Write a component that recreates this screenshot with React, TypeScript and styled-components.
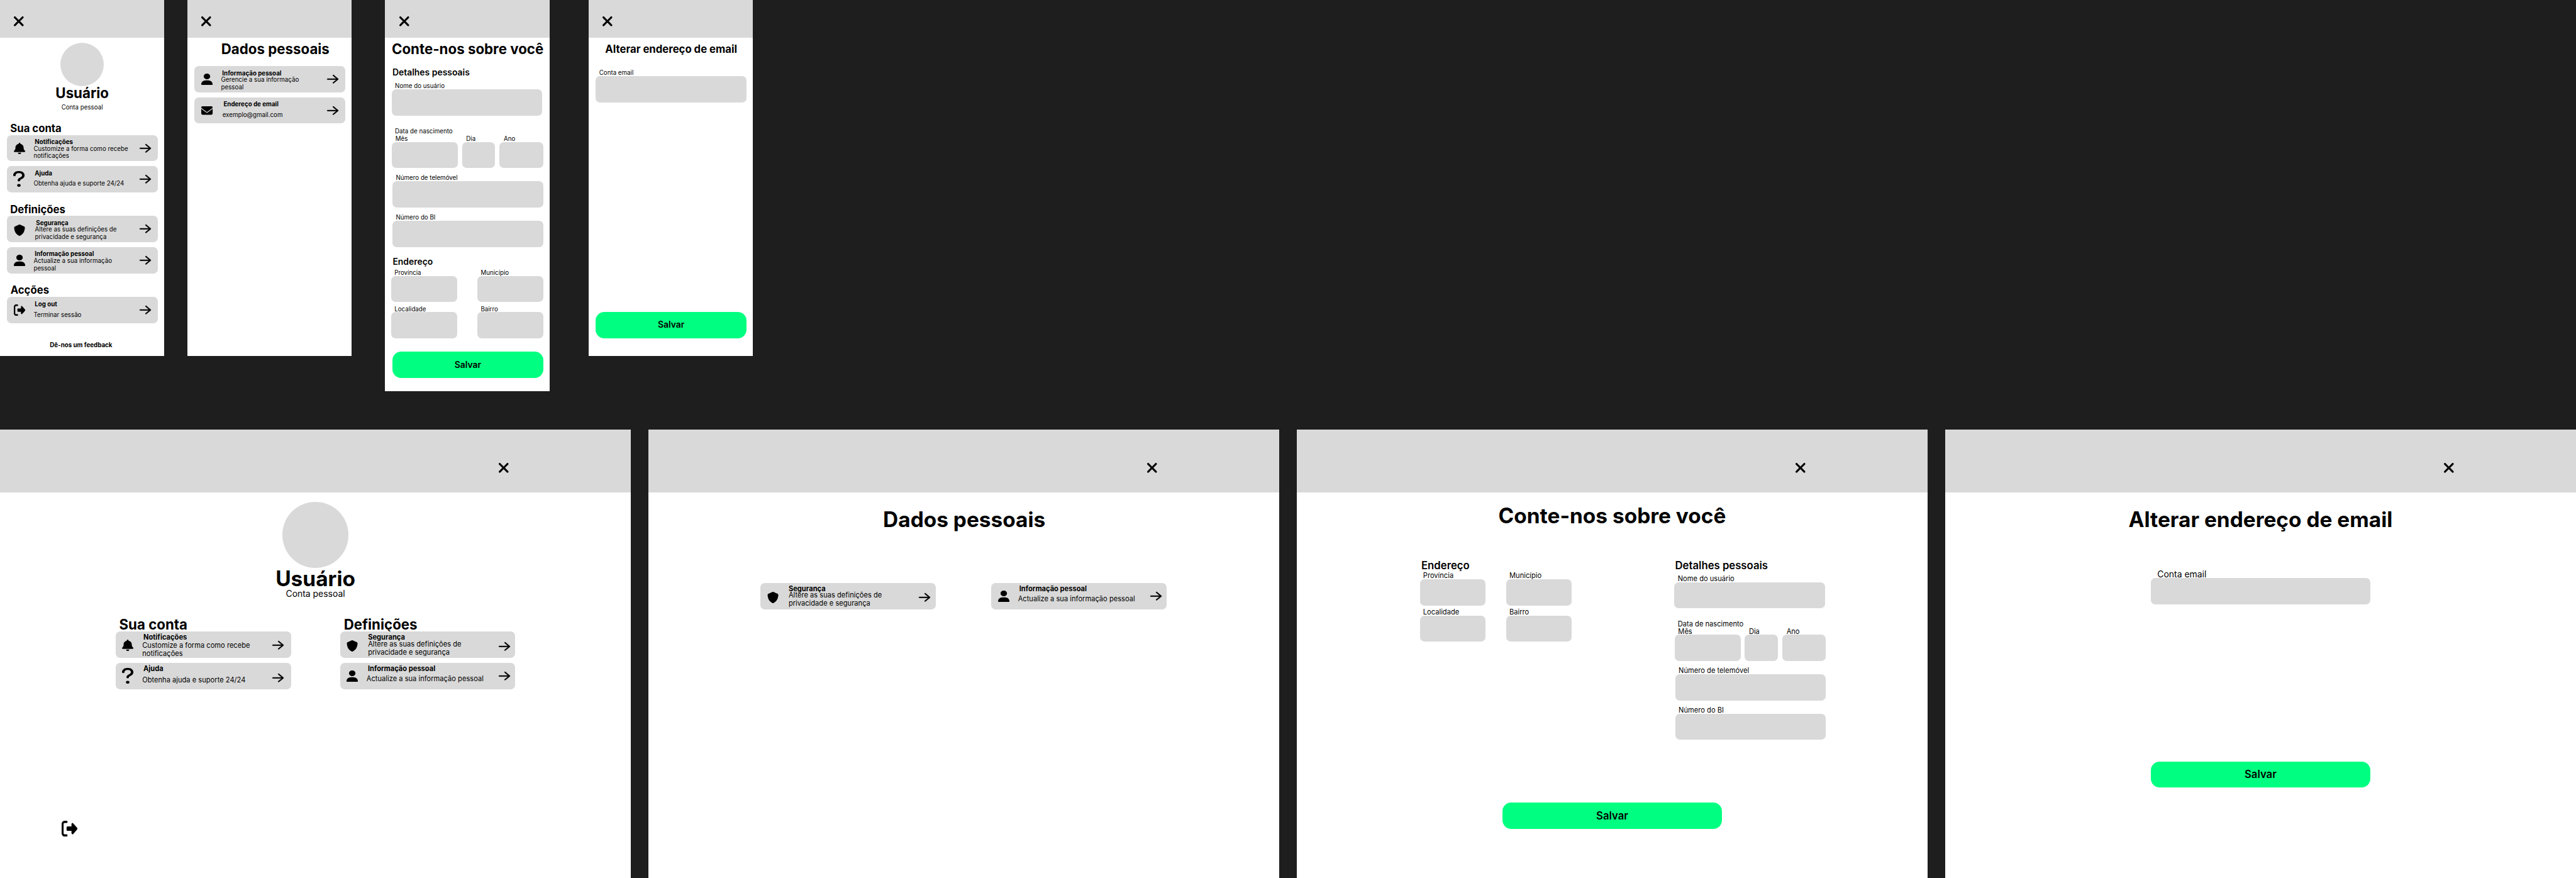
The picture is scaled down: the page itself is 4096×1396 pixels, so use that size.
import React from "react";
import styled, { createGlobalStyle } from "styled-components";

/* Design units are converted to page pixels by this ratio. */
const RATIO = 4096 / 5880;
const u = (n: number) => `${(n * RATIO).toFixed(3)}px`;

const INK = "#000000";
const GREY = "#d9d9d9";
const GREEN = "#00ff80";
const CANVAS = "#1e1e1e";

const GlobalStyle = createGlobalStyle`
  html, body { margin: 0; padding: 0; background: ${CANVAS}; }
  * { box-sizing: border-box; }
  h1, h2, h3, p { margin: 0; }
`;

/* ---------- board ---------- */

const Board = styled.main`
  width: 4096px;
  height: 1396px;
  overflow: hidden;
  display: flex;
  flex-direction: column;
  background: ${CANVAS};
  color: ${INK};
  font-family: Inter, "Liberation Sans", sans-serif;
`;

const PhoneRow = styled.section`
  display: flex;
  align-items: flex-start;
  height: ${u(980)};
  flex: none;
`;

const DesktopRow = styled.section`
  display: flex;
  flex: none;
  gap: ${u(40)};
`;

const Phone = styled.article<{ $gap?: number; $height?: number }>`
  flex: none;
  display: flex;
  flex-direction: column;
  width: ${u(375)};
  height: ${(p) => u(p.$height ?? 812)};
  margin-left: ${(p) => u(p.$gap ?? 0)};
  background: #ffffff;
`;

const Desktop = styled.article`
  flex: none;
  display: flex;
  flex-direction: column;
  width: ${u(1440)};
  height: ${u(1024.4)};
  background: #ffffff;
`;

const PhoneBar = styled.header`
  flex: none;
  height: ${u(86)};
  padding: ${u(37)} 0 0 ${u(32)};
  background: ${GREY};
`;

const DesktopBar = styled.header`
  flex: none;
  height: ${u(144)};
  padding: ${u(76.9)} 0 0 ${u(1137.9)};
  background: ${GREY};
`;

/* ---------- icons ---------- */

const Glyph = styled.svg<{ $w: number; $h: number; $stroke: number }>`
  display: block;
  flex: none;
  width: ${(p) => u(p.$w)};
  height: ${(p) => u(p.$h)};
  overflow: visible;
  fill: ${INK};
  stroke: ${INK};
  stroke-width: ${(p) => p.$stroke};
`;

type IconName = "close" | "bell" | "question" | "shield" | "user" | "envelope" | "logout" | "arrow";

const ICONS: Record<IconName, { box: string; w: number; h: number; stroke?: number; d: string }> = {
  close: {
    box: "32 96 320 320",
    w: 22.4,
    h: 22.6,
    d: "M342.6 150.6c12.5-12.5 12.5-32.8 0-45.3s-32.8-12.5-45.3 0L192 210.7 86.6 105.4c-12.5-12.5-32.8-12.5-45.3 0s-12.5 32.8 0 45.3L146.7 256 41.4 361.4c-12.5 12.5-12.5 32.8 0 45.3s32.8 12.5 45.3 0L192 301.3 297.4 406.6c12.5 12.5 32.8 12.5 45.3 0s12.5-32.8 0-45.3L237.3 256 342.6 150.6z",
  },
  bell: {
    box: "0 0 448 512",
    w: 26,
    h: 26,
    d: "M224 0c-17.7 0-32 14.3-32 32l0 19.2C119 66 64 130.6 64 208l0 18.8c0 47-17.3 92.4-48.5 127.6l-7.4 8.3c-8.4 9.4-10.4 22.9-5.3 34.4S19.4 416 32 416l384 0c12.6 0 24-7.4 29.2-18.9s3.1-25-5.3-34.4l-7.4-8.3C401.3 319.2 384 273.9 384 226.8l0-18.8c0-77.4-55-142-128-156.8L256 32c0-17.7-14.3-32-32-32zm45.3 493.3c12-12 18.7-28.3 18.7-45.3l-64 0-64 0c0 17 6.7 33.3 18.7 45.3s28.3 18.7 45.3 18.7s33.3-6.7 45.3-18.7z",
  },
  question: {
    box: "16 32 288 488",
    w: 26,
    h: 36,
    d: "M80 160c0-35.3 28.7-64 64-64h32c35.3 0 64 28.7 64 64v3.6c0 21.8-11.1 42.1-29.4 53.8l-42.2 27.1c-25.2 16.2-40.4 44.1-40.4 74V320c0 17.7 14.3 32 32 32s32-14.3 32-32v-1.4c0-8.2 4.2-15.8 11-20.2l42.2-27.1c36.6-23.6 58.8-64.1 58.8-107.7V160c0-70.7-57.3-128-128-128H144C73.3 32 16 89.3 16 160c0 17.7 14.3 32 32 32s32-14.3 32-32zm80 360a44 44 0 1 0 0-88 44 44 0 1 0 0 88z",
  },
  shield: {
    box: "0 0 512 512",
    w: 26,
    h: 26,
    d: "M256 0c4.6 0 9.2 1 13.4 2.9L457.7 82.8c22 9.3 38.4 31 38.3 57.2c-.5 99.2-41.3 280.7-213.6 363.2c-16.7 8-36.1 8-52.8 0C57.3 420.7 16.5 239.2 16 140c-.1-26.2 16.3-47.9 38.3-57.2L242.7 2.9C246.8 1 251.4 0 256 0z",
  },
  user: {
    box: "0 0 448 512",
    w: 26,
    h: 26,
    d: "M224 256A128 128 0 1 0 224 0a128 128 0 1 0 0 256zm-45.7 48C79.8 304 0 383.8 0 482.3C0 498.7 13.3 512 29.7 512l388.6 0c16.4 0 29.7-13.3 29.7-29.7C448 383.8 368.2 304 269.7 304l-91.4 0z",
  },
  envelope: {
    box: "0 64 512 384",
    w: 26,
    h: 19.5,
    d: "M48 64C21.5 64 0 85.5 0 112c0 15.1 7.1 29.3 19.2 38.4L236.8 313.6c11.4 8.5 27 8.5 38.4 0L492.8 150.4c12.1-9.1 19.2-23.3 19.2-38.4c0-26.5-21.5-48-48-48L48 64zM0 176L0 384c0 35.3 28.7 64 64 64l384 0c35.3 0 64-28.7 64-64l0-208L294.4 339.2c-22.8 17.1-54 17.1-76.8 0L0 176z",
  },
  logout: {
    box: "0 32 512 448",
    w: 26,
    h: 26,
    d: "M377.9 105.9L500.7 228.7c7.2 7.2 11.3 17.1 11.3 27.3s-4.1 20.1-11.3 27.3L377.9 406.1c-6.4 6.4-15 9.9-24 9.9c-18.7 0-33.9-15.2-33.9-33.9l0-62.1-128 0c-17.7 0-32-14.3-32-32l0-64c0-17.7 14.3-32 32-32l128 0 0-62.1c0-18.7 15.2-33.9 33.9-33.9c9 0 17.6 3.6 24 9.9zM160 96L96 96c-17.7 0-32 14.3-32 32l0 256c0 17.7 14.3 32 32 32l64 0c17.7 0 32 14.3 32 32s-14.3 32-32 32l-64 0c-53 0-96-43-96-96L0 128C0 75 43 32 96 32l64 0c17.7 0 32 14.3 32 32s-14.3 32-32 32z",
  },
  arrow: {
    box: "0 64 448 384",
    w: 26,
    h: 19.5,
    stroke: 9,
    d: "M440.6 273.4c4.7-4.5 7.4-10.8 7.4-17.4s-2.7-12.8-7.4-17.4l-176-168c-9.6-9.2-24.8-8.8-33.9 .8s-8.8 24.8 .8 33.9L364 232 24 232c-13.3 0-24 10.7-24 24s10.7 24 24 24l340 0L231.4 406.6c-9.6 9.2-9.9 24.3-.8 33.9s24.3 9.9 33.9 .8l176-168z",
  },
};

const Icon = ({ name, w, h }: { name: IconName; w?: number; h?: number }) => {
  const icon = ICONS[name];
  return (
    <Glyph
      $w={w ?? icon.w}
      $h={h ?? icon.h}
      $stroke={icon.stroke ?? 0}
      viewBox={icon.box}
      preserveAspectRatio="none"
      aria-hidden="true"
    >
      <path d={icon.d} />
    </Glyph>
  );
};

/* ---------- text ---------- */

interface TextProps {
  $size: number;
  $line: number;
  $top?: number;
  $left?: number;
}

const Title = styled.h1<TextProps>`
  flex: none;
  margin-top: ${(p) => u(p.$top ?? 0)};
  padding-left: ${(p) => u(p.$left ?? 0)};
  height: ${(p) => u(p.$line)};
  line-height: ${(p) => u(p.$line)};
  font-size: ${(p) => u(p.$size)};
  font-weight: 700;
  text-align: center;
  white-space: nowrap;
`;

const GroupHeading = styled.h2<TextProps & { $weight?: number }>`
  flex: none;
  margin-top: ${(p) => u(p.$top ?? 0)};
  padding-left: ${(p) => u(p.$left ?? 0)};
  height: ${(p) => u(p.$line)};
  line-height: ${(p) => u(p.$line + 0.8)};
  font-size: ${(p) => u(p.$size)};
  font-weight: ${(p) => p.$weight ?? 700};
  white-space: nowrap;
`;

const Caption = styled.p<TextProps>`
  margin-top: ${(p) => u(p.$top ?? 0)};
  height: ${(p) => u(p.$line)};
  line-height: ${(p) => u(p.$line + 1.6)};
  font-size: ${(p) => u(p.$size)};
  text-align: center;
`;

const Feedback = styled.p`
  margin-top: ${u(41.8)};
  padding-right: ${u(5)};
  line-height: ${u(17)};
  font-size: ${u(14)};
  font-weight: 700;
  text-align: center;
`;

/* ---------- profile and option rows ---------- */

const Avatar = styled.div<{ $size: number; $top: number }>`
  flex: none;
  align-self: center;
  width: ${(p) => u(p.$size)};
  height: ${(p) => u(p.$size)};
  margin-top: ${(p) => u(p.$top)};
  border-radius: 50%;
  background: ${GREY};
`;

const OptionList = styled.div<{ $width: number; $top?: number; $left?: number }>`
  flex: none;
  display: flex;
  flex-direction: column;
  gap: ${u(11)};
  width: ${(p) => u(p.$width)};
  margin-top: ${(p) => u(p.$top ?? 0)};
  margin-left: ${(p) => u(p.$left ?? 0)};
`;

const OptionCard = styled.div`
  display: flex;
  align-items: flex-start;
  height: ${u(60)};
  border-radius: ${u(10)};
  background: ${GREY};
`;

const IconSlot = styled.div<{ $top: number; $left: number }>`
  flex: none;
  width: ${u(60.7)};
  padding: ${(p) => `${u(p.$top)} 0 0 ${u(p.$left)}`};
`;

const OptionText = styled.div<{ $shift: number; $top: number }>`
  flex: 1;
  padding: ${(p) => `${u(p.$top)} 0 0 ${u(p.$shift)}`};
`;

const OptionTitle = styled.h3<{ $size: number; $indent: number; $box: number }>`
  height: ${(p) => u(p.$box)};
  padding-left: ${(p) => u(p.$indent)};
  line-height: ${(p) => u(p.$size * 1.21)};
  font-size: ${(p) => u(p.$size)};
  font-weight: 700;
  white-space: nowrap;
`;

const OptionDetail = styled.p<{ $size: number; $line: number }>`
  line-height: ${(p) => u(p.$line)};
  font-size: ${(p) => u(p.$size)};
  white-space: pre;
`;

const ArrowSlot = styled.div<{ $center: number; $right: number }>`
  flex: none;
  padding: ${(p) => `${u(p.$center - 9.75)} ${u(p.$right)} 0 0`};
`;

interface OptionProps {
  icon: IconName;
  title: string;
  detail: string;
  iconTop: number;
  detailTop: number;
  iconLeft?: number;
  shift?: number;
  indent?: number;
  large?: boolean;
  arrowCenter?: number;
  arrowRight?: number;
}

const Option = ({
  icon,
  title,
  detail,
  iconTop,
  detailTop,
  iconLeft = 15,
  shift = 0,
  indent = 2.6,
  large = false,
  arrowCenter = 30,
  arrowRight = 16,
}: OptionProps) => {
  const size = large ? 16 : 14;
  const top = large ? 3.8 : 8.2;
  return (
    <OptionCard>
      <IconSlot $top={iconTop} $left={iconLeft}>
        <Icon name={icon} />
      </IconSlot>
      <OptionText $shift={shift} $top={top}>
        <OptionTitle $size={size} $indent={indent} $box={detailTop + 0.8 - top}>
          {title}
        </OptionTitle>
        <OptionDetail $size={size} $line={large ? 19 : 17}>
          {detail}
        </OptionDetail>
      </OptionText>
      <ArrowSlot $center={arrowCenter} $right={arrowRight}>
        <Icon name="arrow" />
      </ArrowSlot>
    </OptionCard>
  );
};

/* ---------- form parts ---------- */

const FieldRow = styled.div<{ $gap: number; $left?: number; $top?: number }>`
  display: flex;
  gap: ${(p) => u(p.$gap)};
  margin-top: ${(p) => u(p.$top ?? 0)};
  margin-left: ${(p) => u(p.$left ?? 0)};
`;

const FieldBlock = styled.label<{ $width: number; $left?: number; $top?: number }>`
  flex: none;
  display: flex;
  flex-direction: column;
  width: ${(p) => u(p.$width)};
  margin-top: ${(p) => u(p.$top ?? 0)};
  margin-left: ${(p) => u(p.$left ?? 0)};
`;

const FieldLabel = styled.span<{ $size: number; $box: number; $indent: number }>`
  height: ${(p) => u(p.$box)};
  padding-left: ${(p) => u(p.$indent)};
  line-height: ${(p) => u(p.$size * 1.21 + 1.8)};
  font-size: ${(p) => u(p.$size)};
  white-space: nowrap;
`;

const FieldBox = styled.span`
  height: ${u(60)};
  border-radius: ${u(10)};
  background: ${GREY};
`;

const SaveButton = styled.button<{ $width: number; $top: number; $left: number; $size: number }>`
  flex: none;
  width: ${(p) => u(p.$width)};
  height: ${u(60)};
  margin: ${(p) => `${u(p.$top)} 0 0 ${u(p.$left)}`};
  padding: 0;
  border: 0;
  border-radius: ${u(20)};
  background: ${GREEN};
  color: ${INK};
  font-family: inherit;
  font-size: ${(p) => u(p.$size)};
  font-weight: 600;
  line-height: ${(p) => u(p.$size * 1.21)};
`;

const Columns = styled.div<{ $top: number; $left: number; $gap: number }>`
  flex: none;
  display: flex;
  align-items: flex-start;
  gap: ${(p) => u(p.$gap)};
  margin-top: ${(p) => u(p.$top)};
  margin-left: ${(p) => u(p.$left)};
`;

const Column = styled.div<{ $width: number; $left?: number; $top?: number }>`
  flex: none;
  display: flex;
  flex-direction: column;
  width: ${(p) => u(p.$width)};
  margin-top: ${(p) => u(p.$top ?? 0)};
  margin-left: ${(p) => u(p.$left ?? 0)};
`;

const SignOut = styled.div`
  padding: ${u(300)} 0 0 ${u(140)};
`;

interface Scale {
  label: number;
  box: number;
  heading: number;
  headingLine: number;
}

const PHONE: Scale = { label: 14, box: 17, heading: 20, headingLine: 24 };
const DESKTOP: Scale = { label: 16, box: 18, heading: 24, headingLine: 29 };

interface FieldProps {
  label: string;
  width: number;
  scale: Scale;
  indent?: number;
  left?: number;
  top?: number;
}

const Field = ({ label, width, scale, indent = 7.7, left, top }: FieldProps) => (
  <FieldBlock $width={width} $left={left} $top={top}>
    <FieldLabel $size={scale.label} $box={scale.box} $indent={indent}>
      {label}
    </FieldLabel>
    <FieldBox />
  </FieldBlock>
);

const PersonalDetails = ({ scale, gaps }: { scale: Scale; gaps: [number, number, number] }) => (
  <>
    <GroupHeading $size={scale.heading} $line={scale.headingLine} $left={1.7} $weight={600}>
      Detalhes pessoais
    </GroupHeading>
    <Field label="Nome do usuário" width={344} scale={scale} top={gaps[0]} />
    <FieldBlock as="div" $width={344} $top={gaps[1]}>
      <FieldLabel $size={scale.label} $box={17} $indent={7.7}>
        Data de nascimento
      </FieldLabel>
    </FieldBlock>
    <FieldRow $gap={10} $left={1}>
      <Field label="Mês" width={150} scale={scale} indent={7.6} />
      <Field label="Dia" width={75} scale={scale} indent={9.2} />
      <Field label="Ano" width={100} scale={scale} indent={10} />
    </FieldRow>
    <Field label="Número de telemóvel" width={344} scale={scale} left={2} top={gaps[2]} />
    <Field label="Número do BI" width={344} scale={scale} left={2} top={gaps[2]} />
  </>
);

const Address = ({ scale, gaps }: { scale: Scale; gaps: [number, number] }) => (
  <>
    <GroupHeading $size={scale.heading} $line={scale.headingLine} $left={3.4} $weight={600}>
      Endereço
    </GroupHeading>
    <FieldRow $gap={47} $top={gaps[0]}>
      <Field label="Província" width={150} scale={scale} indent={7.4} />
      <Field label="Município" width={150} scale={scale} indent={7.4} />
    </FieldRow>
    <FieldRow $gap={47} $top={gaps[1]}>
      <Field label="Localidade" width={150} scale={scale} indent={7.4} />
      <Field label="Bairro" width={150} scale={scale} indent={7.4} />
    </FieldRow>
  </>
);

/* ---------- phone screens ---------- */

const PhoneAccount = () => (
  <Phone>
    <PhoneBar>
      <Icon name="close" />
    </PhoneBar>
    <Avatar $size={100} $top={11} />
    <Title $size={32} $line={39} $top={-5}>
      Usuário
    </Title>
    <Caption $size={14} $line={17} $top={6.4}>
      Conta pessoal
    </Caption>
    <GroupHeading $size={24} $line={29} $top={23.9} $left={23.5}>
      Sua conta
    </GroupHeading>
    <OptionList $width={344} $left={16} $top={0.7}>
      <Option icon="bell" iconTop={18} title="Notificações" detail={"Customize a forma como recebe\nnotificações"} detailTop={22.4} />
      <Option icon="question" iconTop={11} iconLeft={14} title="Ajuda" detail="Obtenha ajuda e suporte 24/24" detailTop={31.4} />
    </OptionList>
    <GroupHeading $size={24} $line={29} $top={24.3} $left={23.3}>
      Definições
    </GroupHeading>
    <OptionList $width={344} $left={16} $top={0.7}>
      <Option icon="shield" iconTop={20} shift={3} title="Segurança" detail={"Altere as suas definições de\nprivacidade e segurança"} detailTop={22.4} />
      <Option icon="user" iconTop={17} title="Informação pessoal" detail={"Actualize a sua informação\npessoal"} detailTop={22.4} />
    </OptionList>
    <GroupHeading $size={24} $line={29} $top={24.3} $left={24}>
      Acções
    </GroupHeading>
    <OptionList $width={344} $left={16} $top={0.7}>
      <Option icon="logout" iconTop={17} title="Log out" detail="Terminar sessão" detailTop={31.4} />
    </OptionList>
    <Feedback>Dê-nos um feedback</Feedback>
  </Phone>
);

const PhoneData = () => (
  <Phone $gap={53}>
    <PhoneBar>
      <Icon name="close" />
    </PhoneBar>
    <Title $size={32} $line={39} $top={6} $left={26}>
      Dados pessoais
    </Title>
    <OptionList $width={344} $left={16} $top={20}>
      <Option icon="user" iconTop={17} title="Informação pessoal" detail={"Gerencie a sua informação\npessoal"} detailTop={22.4} />
      <Option icon="envelope" iconTop={20.3} iconLeft={16} shift={3} title="Endereço de email" detail="exemplo@gmail.com" detailTop={31.4} />
    </OptionList>
  </Phone>
);

const PhoneForm = () => (
  <Phone $gap={76} $height={893}>
    <PhoneBar>
      <Icon name="close" />
    </PhoneBar>
    <Title $size={32} $line={39} $top={6} $left={2}>
      Conte-nos sobre você
    </Title>
    <Column $width={346} $left={15} $top={22.6}>
      <PersonalDetails scale={PHONE} gaps={[9.4, 26, 13]} />
    </Column>
    <Column $width={347} $left={14} $top={22.6}>
      <Address scale={PHONE} gaps={[2.4, 6]} />
    </Column>
    <SaveButton $width={344} $top={30} $left={17} $size={20}>
      Salvar
    </SaveButton>
  </Phone>
);

const PhoneEmail = () => (
  <Phone $gap={90}>
    <PhoneBar>
      <Icon name="close" />
    </PhoneBar>
    <Title $size={24} $line={29} $top={11} $left={1}>
      Alterar endereço de email
    </Title>
    <Field label="Conta email" width={344} scale={PHONE} left={16} top={31} />
    <SaveButton $width={344} $top={478} $left={16} $size={20}>
      Salvar
    </SaveButton>
  </Phone>
);

/* ---------- desktop screens ---------- */

const SecurityOption = () => (
  <Option
    large
    icon="shield"
    iconTop={20}
    shift={3.4}
    indent={0}
    title="Segurança"
    detail={"Altere as suas definições de\nprivacidade e segurança"}
    detailTop={18}
    arrowCenter={33}
    arrowRight={12}
  />
);

const PersonalOption = () => (
  <Option
    large
    icon="user"
    iconTop={17}
    indent={3}
    title="Informação pessoal"
    detail="Actualize a sua informação pessoal"
    detailTop={27}
    arrowRight={12}
  />
);

const DesktopAccount = () => (
  <Desktop>
    <DesktopBar>
      <Icon name="close" />
    </DesktopBar>
    <Avatar $size={150} $top={22} />
    <Title $size={48} $line={58} $top={-3.6}>
      Usuário
    </Title>
    <Caption $size={20} $line={24} $top={-6.6}>
      Conta pessoal
    </Caption>
    <Columns $top={37.2} $left={264} $gap={112}>
      <Column $width={400}>
        <GroupHeading $size={32} $line={39} $left={8}>
          Sua conta
        </GroupHeading>
        <OptionList $width={400} $top={-2}>
          <Option
            large
            icon="bell"
            iconTop={18}
            title="Notificações"
            detail={"Customize a forma como recebe\nnotificações"}
            detailTop={21}
            arrowRight={17}
          />
          <Option
            large
            icon="question"
            iconTop={11}
            iconLeft={14}
            title="Ajuda"
            detail="Obtenha ajuda e suporte 24/24"
            detailTop={30}
            arrowCenter={34}
            arrowRight={17}
          />
        </OptionList>
      </Column>
      <Column $width={400}>
        <GroupHeading $size={32} $line={39} $left={8.8}>
          Definições
        </GroupHeading>
        <OptionList $width={400} $top={-2}>
          <SecurityOption />
          <PersonalOption />
        </OptionList>
      </Column>
    </Columns>
    <SignOut>
      <Icon name="logout" w={36} h={36} />
    </SignOut>
  </Desktop>
);

const DesktopData = () => (
  <Desktop>
    <DesktopBar>
      <Icon name="close" />
    </DesktopBar>
    <Title $size={48} $line={58} $top={33} $left={2}>
      Dados pessoais
    </Title>
    <Columns $top={116} $left={256} $gap={127}>
      <OptionList $width={400}>
        <SecurityOption />
      </OptionList>
      <OptionList $width={400}>
        <PersonalOption />
      </OptionList>
    </Columns>
  </Desktop>
);

const DesktopForm = () => (
  <Desktop>
    <DesktopBar>
      <Icon name="close" />
    </DesktopBar>
    <Title $size={48} $line={58} $top={24.8}>
      Conte-nos sobre você
    </Title>
    <Columns $top={69.2} $left={281} $gap={234}>
      <Column $width={347}>
        <Address scale={DESKTOP} gaps={[-1, 5]} />
      </Column>
      <Column $width={346}>
        <PersonalDetails scale={DESKTOP} gaps={[6, 25, 12]} />
      </Column>
    </Columns>
    <SaveButton $width={500} $top={143} $left={470} $size={24}>
      Salvar
    </SaveButton>
  </Desktop>
);

const DesktopEmail = () => (
  <Desktop>
    <DesktopBar>
      <Icon name="close" />
    </DesktopBar>
    <Title $size={48} $line={58} $top={33}>
      Alterar endereço de email
    </Title>
    <Field
      label="Conta email"
      width={500}
      scale={{ ...DESKTOP, label: 20, box: 22.6 }}
      indent={14.5}
      left={470}
      top={82.4}
    />
    <SaveButton $width={500} $top={358} $left={470} $size={24}>
      Salvar
    </SaveButton>
  </Desktop>
);

export default function App() {
  return (
    <>
      <GlobalStyle />
      <Board>
        <PhoneRow>
          <PhoneAccount />
          <PhoneData />
          <PhoneForm />
          <PhoneEmail />
        </PhoneRow>
        <DesktopRow>
          <DesktopAccount />
          <DesktopData />
          <DesktopForm />
          <DesktopEmail />
        </DesktopRow>
      </Board>
    </>
  );
}
